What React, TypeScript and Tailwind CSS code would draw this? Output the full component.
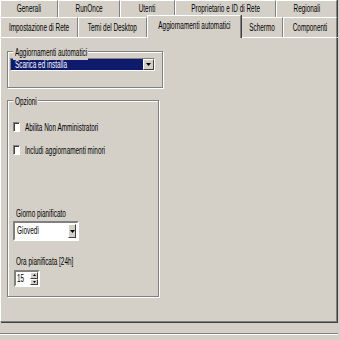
import React from "react";

function T({ children, c }: { children: React.ReactNode; c?: boolean }) {
  return (
    <span
      className={
        "inline-block whitespace-nowrap scale-x-[0.64] leading-[12px] " +
        (c ? "origin-center" : "origin-left")
      }
    >
      {children}
    </span>
  );
}

function Tab({ label, cls }: { label: string; cls: string }) {
  return (
    <div
      className={
        "flex h-full items-center justify-center overflow-visible border-l border-t border-r border-white border-r-[#808080] shadow-[1px_0_0_#404040] " +
        cls
      }
    >
      <T c>{label}</T>
    </div>
  );
}

function Arrow() {
  return (
    <svg width="5" height="3" viewBox="0 0 5 3">
      <path d="M0 0H5L2.5 3Z" fill="#000" />
    </svg>
  );
}

function Check({ label }: { label: string }) {
  return (
    <div className="flex h-[10px] items-center">
      <div className="h-[10px] w-[7px] border border-[#808080] border-r-white border-b-white bg-white shadow-[inset_1px_1px_0_#404040]" />
      <div className="ml-[5px]">
        <T>{label}</T>
      </div>
    </div>
  );
}

export default function App() {
  return (
    <div
      className="h-[340px] w-[340px] overflow-hidden bg-[#d4d0c8] text-[10px] text-black"
      style={{ fontFamily: '"Liberation Sans", Arial, sans-serif' }}
    >
      <div className="flex h-[17px]">
        <Tab label="Generali" cls="w-[58px]" />
        <Tab label="RunOnce" cls="w-[62px]" />
        <Tab label="Utenti" cls="w-[55px]" />
        <Tab label="Proprietario e ID di Rete" cls="w-[101px]" />
        <Tab label="Regionali" cls="w-[61px]" />
      </div>
      <div className="flex h-[20px] items-start">
        <Tab label="Impostazione di Rete" cls="w-[78px]" />
        <Tab label="Temi del Desktop" cls="w-[69px]" />
        <div className="relative z-10 -mt-[2px] flex h-[23px] w-[94px] items-center justify-center border-l border-t border-r border-white border-r-[#808080] bg-[#d4d0c8] pb-[2px] shadow-[1px_0_0_#404040]">
          <T c>Aggiornamenti automatici</T>
        </div>
        <Tab label="Schermo" cls="w-[42px]" />
        <Tab label="Componenti" cls="w-[54px]" />
      </div>
      <div className="h-[285px] w-[337px] border border-white border-r-[#808080] border-b-[#808080] px-[6px] shadow-[1px_1px_0_#404040]">
        <div className="relative mt-[13px] h-[37px] w-[156px] border border-[#808080] shadow-[inset_1px_1px_0_#fff,1px_1px_0_#fff]">
          <div className="absolute -top-[7px] left-[5px] w-[75px] bg-[#d4d0c8] pl-[2px]">
            <T>Aggiornamenti automatici</T>
          </div>
          <div className="ml-[2px] mt-[6px] flex h-[13px] w-[145px] border border-[#808080] border-r-white border-b-white bg-[#0e1a6c]">
            <div className="flex flex-1 items-center pl-[4px] text-white">
              <T>Scarica ed installa</T>
            </div>
            <div className="flex w-[11px] items-center justify-center border border-white border-r-[#404040] border-b-[#404040] bg-[#d4d0c8]">
              <Arrow />
            </div>
          </div>
        </div>
        <div className="relative mt-[12px] h-[197px] w-[152px] border border-[#808080] shadow-[inset_1px_1px_0_#fff,1px_1px_0_#fff]">
          <div className="absolute -top-[7px] left-[5px] w-[25px] bg-[#d4d0c8] pl-[2px]">
            <T>Opzioni</T>
          </div>
          <div className="flex flex-col pl-[5px]">
            <div className="mt-[21px]">
              <Check label="Abilita Non Amministratori" />
            </div>
            <div className="mt-[13px]">
              <Check label="Includi aggiornamenti minori" />
            </div>
            <div className="mt-[51px] h-[12px] pl-[3px]">
              <T>Giorno pianificato</T>
            </div>
            <div className="mt-[3px] flex h-[20px] w-[66px] border-2 border-[#808080] border-r-white border-b-white bg-white">
              <div className="flex flex-1 items-center pl-[2px]">
                <T>Giovedì</T>
              </div>
              <div className="my-[1px] mr-[1px] flex w-[8px] items-center justify-center border border-white border-r-[#404040] border-b-[#404040] bg-[#d4d0c8]">
                <Arrow />
              </div>
            </div>
            <div className="mt-[13px] h-[12px] pl-[3px]">
              <T>Ora pianificata [24h]</T>
            </div>
            <div className="ml-[1px] mt-[4px] flex h-[17px] w-[26px] border-2 border-[#808080] border-r-white border-b-white bg-white">
              <div className="flex flex-1 items-center pl-[1px]">
                <T>15</T>
              </div>
              <div className="flex w-[8px] flex-col">
                <div className="flex flex-1 items-center justify-center border border-white border-r-[#404040] border-b-[#404040] bg-[#d4d0c8]">
                  <svg width="3" height="2" viewBox="0 0 3 2">
                    <path d="M0 2H3L1.5 0Z" fill="#000" />
                  </svg>
                </div>
                <div className="flex flex-1 items-center justify-center border border-white border-r-[#404040] border-b-[#404040] bg-[#d4d0c8]">
                  <svg width="3" height="2" viewBox="0 0 3 2">
                    <path d="M0 0H3L1.5 2Z" fill="#000" />
                  </svg>
                </div>
              </div>
            </div>
          </div>
        </div>
      </div>
      <div className="mt-[11px] h-[2px] w-[338px] border-t border-[#808080] border-b border-b-white" />
    </div>
  );
}
